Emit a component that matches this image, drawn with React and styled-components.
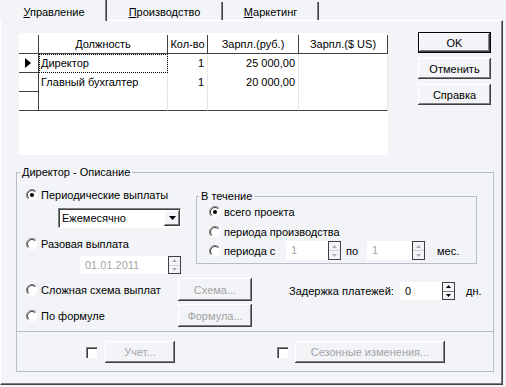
import styled, { createGlobalStyle } from "styled-components";

const GlobalStyle = createGlobalStyle`
  html, body { margin: 0; padding: 0; background: #f2f4f7; }
  body { font-family: "Liberation Sans", Arial, sans-serif; font-size: 11px; color: #000; }
  * { box-sizing: border-box; }
`;

const Window = styled.div`
  width: 506px;
  height: 387px;
  overflow: hidden;
  background: #f2f4f7;
`;

const TabStrip = styled.div`
  display: flex;
  align-items: flex-start;
  height: 20px;
  padding-left: 2px;
  position: relative;
  z-index: 1;
`;

const Tab = styled.div`
  width: ${(p) => p.$w}px;
  height: ${(p) => (p.$active ? 21 : 18)}px;
  margin-top: ${(p) => (p.$active ? 0 : 2)}px;
  padding-top: ${(p) => (p.$active ? 5 : 3)}px;
  line-height: 14px;
  text-align: center;
  background: #f2f4f7;
  border-right: 1px solid #404040;
  box-shadow: inset -1px 0 #808080;
`;

const Panel = styled.div`
  width: 503px;
  height: 365px;
  border-top: 1px solid #fff;
  border-left: 1px solid #fff;
  border-right: 1px solid #404040;
  border-bottom: 1px solid #404040;
  box-shadow: inset -1px -1px #808080;
`;

const TopRow = styled.div`
  display: flex;
  align-items: flex-start;
  padding: 11px 0 0 18px;
`;

const GridArea = styled.div`
  margin-top: 1px;
  width: 369px;
  height: 122px;
  background: #fff;
  display: grid;
  grid-template-columns: 20px 129px 40px 91px 89px;
  grid-auto-rows: min-content;
  align-content: start;
`;

const HeadCell = styled.div`
  margin-top: 2px;
  height: 19px;
  line-height: 18px;
  text-align: center;
  border-right: 1px solid #404040;
  border-bottom: 1px solid #404040;
  white-space: nowrap;
`;

const Cell = styled.div`
  height: 19px;
  line-height: 18px;
  padding: 0 3px 0 2px;
  text-align: ${(p) => (p.$num ? "right" : "left")};
  border-right: 1px solid ${(p) => (p.$ind ? "#404040" : "#e6e6e6")};
  border-bottom: 1px solid ${(p) => (p.$ind || p.$last ? "#404040" : "transparent")};
  outline: ${(p) => (p.$focus ? "1px dotted #000" : "none")};
  outline-offset: -1px;
  display: flex;
  align-items: center;
  justify-content: ${(p) => (p.$ind ? "center" : p.$num ? "flex-end" : "flex-start")};
  white-space: nowrap;
`;

const ButtonColumn = styled.div`
  margin-left: 30px;
  display: flex;
  flex-direction: column;
  gap: 5px;
`;

const Button = styled.button`
  width: ${(p) => p.$w}px;
  height: ${(p) => p.$h || 21}px;
  padding: 0;
  font: inherit;
  color: ${(p) => (p.disabled ? "#a4a4a4" : "#000")};
  background: #f2f4f7;
  border: ${(p) => (p.$default ? "1px solid #000" : "none")};
  box-shadow: inset -1px -1px #404040, inset 1px 1px #fff, inset -2px -2px #808080;
`;

const GroupBox = styled.fieldset`
  margin: ${(p) => p.$m};
  width: ${(p) => p.$w}px;
  min-width: 0;
  padding: 0 0 ${(p) => p.$pb}px 0;
  border: 1px solid #b9bec6;
  legend {
    margin-left: ${(p) => (p.$inner ? 2 : 3)}px;
    padding: 0 2px;
    line-height: 13px;
  }
`;

const Section = styled.div`
  display: flex;
  align-items: ${(p) => p.$align || "flex-start"};
  margin-top: ${(p) => p.$mt || 0}px;
  padding-left: ${(p) => p.$pl || 0}px;
  height: ${(p) => (p.$h ? p.$h + "px" : "auto")};
`;

const Column = styled.div`
  width: ${(p) => p.$w}px;
  padding-left: ${(p) => p.$pl || 0}px;
  display: flex;
  flex-direction: column;
`;

const Row = styled.div`
  display: flex;
  align-items: center;
  height: ${(p) => p.$h || 16}px;
  margin: ${(p) => p.$mt || 0}px 0 0 ${(p) => p.$ml || 0}px;
  white-space: nowrap;
`;

const Label = styled.span`
  display: inline-block;
  width: ${(p) => (p.$w ? p.$w + "px" : "auto")};
  margin-left: ${(p) => p.$ml || 0}px;
  color: ${(p) => (p.$dim ? "#a4a4a4" : "#000")};
`;

const RadioLabel = styled.label`
  display: flex;
  align-items: center;
  gap: 2px;
  width: ${(p) => (p.$w ? p.$w + "px" : "auto")};
`;

const Select = styled.div`
  margin: 5px 0 0 32px;
  width: 123px;
  height: 20px;
  display: flex;
  align-items: stretch;
  background: #fff;
  border-top: 1px solid #808080;
  border-left: 1px solid #808080;
  border-right: 1px solid #fff;
  border-bottom: 1px solid #fff;
  box-shadow: inset 1px 1px #404040;
  span {
    flex: 1;
    padding-left: 3px;
    line-height: 18px;
  }
`;

const DropButton = styled.div`
  width: 16px;
  margin: 1px 0 1px 0;
  display: flex;
  align-items: center;
  justify-content: center;
  background: #f2f4f7;
  box-shadow: inset -1px -1px #404040, inset 1px 1px #fff, inset -2px -2px #808080;
`;

const Field = styled.div`
  width: ${(p) => p.$w}px;
  height: ${(p) => p.$h || 18}px;
  line-height: ${(p) => p.$h || 18}px;
  padding-left: 5px;
  background: #fff;
  color: ${(p) => (p.$dim ? "#a4a4a4" : "#000")};
`;

const SpinBox = styled.div`
  width: 13px;
  height: ${(p) => p.$h || 18}px;
  border: 1px solid #404040;
  background: #f2f4f7;
  display: flex;
  flex-direction: column;
  div {
    flex: 1;
    display: flex;
    align-items: center;
    justify-content: center;
  }
  div + div {
    border-top: 1px solid ${(p) => (p.$dim ? "#cfd2d6" : "#808080")};
  }
`;

const Separator = styled.div`
  margin-top: 4px;
  height: 1px;
  background: #b9bec6;
`;

const Check = styled.span`
  width: 11px;
  height: 11px;
  margin-left: ${(p) => p.$ml || 0}px;
  margin-right: ${(p) => p.$mr || 0}px;
  background: #fff;
  border-top: 1px solid #808080;
  border-left: 1px solid #808080;
  box-shadow: inset 1px 1px #404040;
`;

function Radio({ checked }) {
  return (
    <svg width="13" height="12" viewBox="0 0 13 12">
      <circle cx="6" cy="6" r="5.5" fill="#fff" />
      <path d="M9.9 2.1 A5.5 5.5 0 0 0 2.1 9.9" stroke="#808080" fill="none" />
      <path d="M9.2 2.8 A4.5 4.5 0 0 0 2.8 9.2" stroke="#404040" fill="none" />
      {checked && <circle cx="6" cy="6" r="2" fill="#000" />}
    </svg>
  );
}

function Spinner({ dim, h }) {
  const c = dim ? "#b0b0b0" : "#000";
  return (
    <SpinBox $dim={dim} $h={h}>
      <div>
        <svg width="5" height="3" viewBox="0 0 5 3">
          <path d="M0 3 L2.5 0 L5 3 Z" fill={c} />
        </svg>
      </div>
      <div>
        <svg width="5" height="3" viewBox="0 0 5 3">
          <path d="M0 0 L2.5 3 L5 0 Z" fill={c} />
        </svg>
      </div>
    </SpinBox>
  );
}

const rows = [
  { name: "Директор", qty: "1", rub: "25 000,00", current: true },
  { name: "Главный бухгалтер", qty: "1", rub: "20 000,00" },
  { name: "", qty: "", rub: "", last: true },
];

export default function App() {
  return (
    <Window>
      <GlobalStyle />
      <TabStrip>
        <Tab $w={105} $active>
          <u>У</u>правление
        </Tab>
        <Tab $w={116}>
          <u>П</u>роизводство
        </Tab>
        <Tab $w={96}>
          <u>М</u>аркетинг
        </Tab>
      </TabStrip>
      <Panel>
        <TopRow>
          <GridArea>
            <HeadCell />
            <HeadCell>Должность</HeadCell>
            <HeadCell>Кол-во</HeadCell>
            <HeadCell>Зарпл.(руб.)</HeadCell>
            <HeadCell>Зарпл.($ US)</HeadCell>
            {rows.map((r, i) => [
              <Cell key={i + "i"} $ind>
                {r.current && (
                  <svg width="6" height="10" viewBox="0 0 6 10">
                    <path d="M0 0 L6 5 L0 10 Z" fill="#000" />
                  </svg>
                )}
              </Cell>,
              <Cell key={i + "n"} $last={r.last} $focus={r.current}>
                {r.name}
              </Cell>,
              <Cell key={i + "q"} $last={r.last} $num>
                {r.qty}
              </Cell>,
              <Cell key={i + "r"} $last={r.last} $num>
                {r.rub}
              </Cell>,
              <Cell key={i + "u"} $last={r.last} $num />,
            ])}
          </GridArea>
          <ButtonColumn>
            <Button $w={73} $default>OK</Button>
            <Button $w={73}>Отменить</Button>
            <Button $w={73}>Справка</Button>
          </ButtonColumn>
        </TopRow>

        <GroupBox $m="11px 0 0 15px" $w={478} $pb={8}>
          <legend>Директор - Описание</legend>
          <Section>
            <Column $w={164} $pl={9}>
              <Row $mt={8}>
                <RadioLabel>
                  <Radio checked />
                  Периодические выплаты
                </RadioLabel>
              </Row>
              <Select>
                <span>Ежемесячно</span>
                <DropButton>
                  <svg width="7" height="4" viewBox="0 0 7 4">
                    <path d="M0 0 L7 0 L3.5 4 Z" fill="#000" />
                  </svg>
                </DropButton>
              </Select>
              <Row $mt={8}>
                <RadioLabel>
                  <Radio />
                  Разовая выплата
                </RadioLabel>
              </Row>
              <Row $mt={4} $ml={54} $h={18}>
                <Field $w={88} $dim>
                  01.01.2011
                </Field>
                <Spinner dim />
              </Row>
            </Column>
            <GroupBox $m="11px 0 0 15px" $w={281} $pb={3} $inner>
              <legend>В течение</legend>
              <Column $pl={12}>
                <Row $mt={1}>
                  <RadioLabel>
                    <Radio checked />
                    всего проекта
                  </RadioLabel>
                </Row>
                <Row $mt={4}>
                  <RadioLabel>
                    <Radio />
                    периода производства
                  </RadioLabel>
                </Row>
                <Row $mt={1} $h={19}>
                  <RadioLabel $w={77}>
                    <Radio />
                    периода с
                  </RadioLabel>
                  <Field $w={42} $h={19} $dim>
                    1
                  </Field>
                  <Spinner dim h={19} />
                  <Label $w={21} $ml={5}>
                    по
                  </Label>
                  <Field $w={45} $h={19} $dim>
                    1
                  </Field>
                  <Spinner dim h={19} />
                  <Label $ml={12}>мес.</Label>
                </Row>
              </Column>
            </GroupBox>
          </Section>

          <Section>
            <Column $w={235} $pl={9}>
              <Row $mt={4} $h={23}>
                <RadioLabel $w={152}>
                  <Radio />
                  Сложная схема выплат
                </RadioLabel>
                <Button $w={74} $h={23} disabled>
                  Схема...
                </Button>
              </Row>
              <Row $mt={3} $h={23}>
                <RadioLabel $w={152}>
                  <Radio />
                  По формуле
                </RadioLabel>
                <Button $w={74} $h={23} disabled>
                  Формула...
                </Button>
              </Row>
            </Column>
            <Row $mt={8} $ml={37} $h={18}>
              <Label $w={111}>Задержка платежей:</Label>
              <Field $w={42}>0</Field>
              <Spinner />
              <Label $ml={11}>дн.</Label>
            </Row>
          </Section>

          <Separator />

          <Section $mt={9} $pl={69} $align="center" $h={22}>
            <Check $mr={8} />
            <Button $w={70} $h={22} disabled>
              Учет...
            </Button>
            <Check $ml={102} $mr={7} />
            <Button $w={150} $h={22} disabled>
              Сезонные изменения...
            </Button>
          </Section>
        </GroupBox>
      </Panel>
    </Window>
  );
}
